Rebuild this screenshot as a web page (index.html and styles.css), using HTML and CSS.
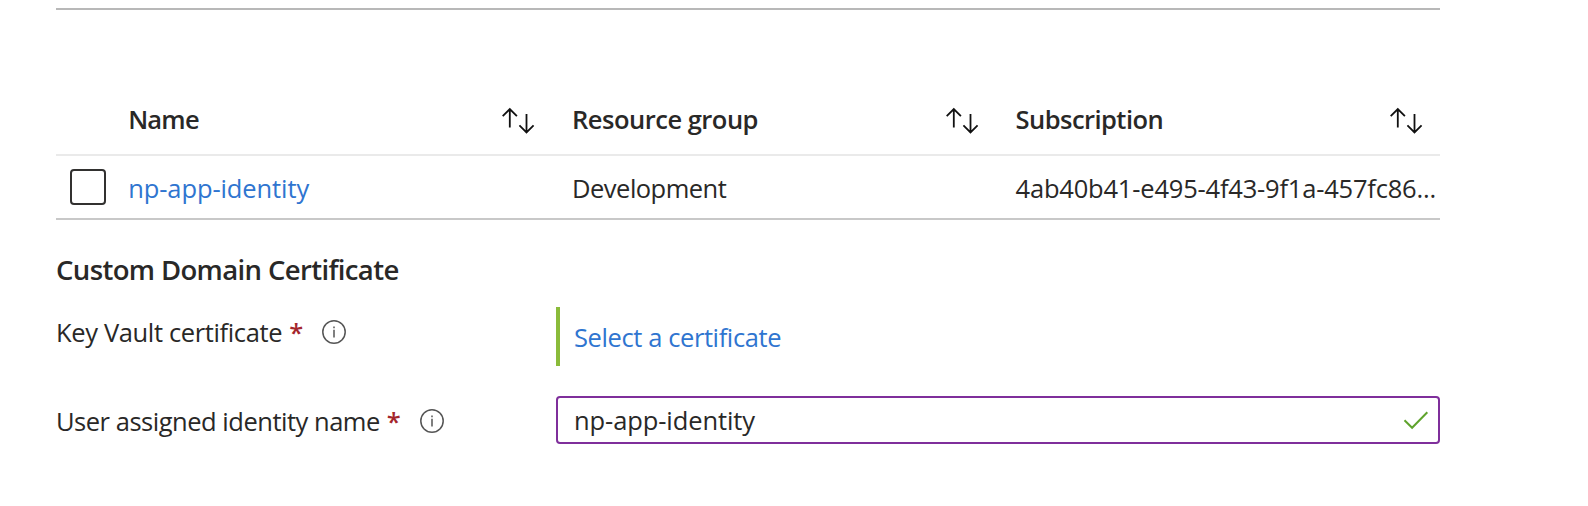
FILE: index.html
```html
<!DOCTYPE html>
<html lang="en">
<head>
<meta charset="utf-8">
<title>Custom Domain Certificate</title>
<link rel="stylesheet" href="styles.css">
</head>
<body>
<svg class="defs" aria-hidden="true">
  <symbol id="sort" viewBox="0 0 34 28"><path d="M7.8 20.5V2.3M.7 9.2l7.1-7.1 7.1 7.1M24.5 7v18.2M17.4 18.3l7.1 7.1 7.1-7.1"/></symbol>
  <symbol id="info" viewBox="0 0 24 24"><circle cx="12" cy="12" r="11.2"/><path d="M12 9.8v7.6M12 6.4v1.8"/></symbol>
</svg>
<main class="panel">
  <div class="identities">
    <div class="row head">
      <div class="cell"></div>
      <div class="cell"><span class="t-name">Name</span><svg class="sort"><use href="#sort"/></svg></div>
      <div class="cell"><span class="t-group">Resource group</span><svg class="sort"><use href="#sort"/></svg></div>
      <div class="cell"><span class="t-sub">Subscription</span><svg class="sort last"><use href="#sort"/></svg></div>
    </div>
    <div class="row body">
      <div class="cell"><span class="checkbox" role="checkbox" aria-checked="false"></span></div>
      <div class="cell"><a class="link t-identity">np-app-identity</a></div>
      <div class="cell"><span class="t-dev">Development</span></div>
      <div class="cell"><span class="t-guid">4ab40b41-e495-4f43-9f1a-457fc86...</span></div>
    </div>
  </div>
  <h2 class="title">Custom Domain Certificate</h2>
  <div class="field vault">
    <div class="label"><span class="t-vault">Key Vault certificate</span><span class="required">*</span><svg class="info"><use href="#info"/></svg></div>
    <div class="select"><a class="link t-select">Select a certificate</a></div>
  </div>
  <div class="field user">
    <div class="label"><span class="t-user">User assigned identity name</span><span class="required">*</span><svg class="info"><use href="#info"/></svg></div>
    <div class="input"><span class="t-identity">np-app-identity</span><svg class="check" viewBox="0 0 26 20"><path d="M1.5 10.3l7.6 7.5L24.3 2.2"/></svg></div>
  </div>
</main>
</body>
</html>
```
FILE: styles.css
```css
* { box-sizing: border-box; }
body {
  margin: 0;
  background: #fff;
  color: #292827;
  font: 25.5px/36px "Open Sans", "Noto Sans", sans-serif;
  white-space: nowrap;
}
.defs { display: none; }
.panel { width: 1384px; margin-left: 56px; padding-top: 8px; }
.identities { border-top: 2px solid #b8b8b8; padding-top: 74px; }
.row { display: grid; grid-template-columns: 72.2px 443.9px 443.5px 1fr; }
.cell { display: flex; align-items: center; }
.head { height: 72px; border-bottom: 2px solid #eaeaea; font-weight: 600; }
.body { height: 64px; border-bottom: 2px solid #c8c8c8; }
.body .cell + .cell { padding-top: 2px; }
.sort { width: 34px; height: 28px; margin-top: 3px; margin-left: auto; margin-right: 36px; fill: none; stroke: #111; stroke-width: 1.8; }
.sort.last { margin-right: 16px; }
.checkbox { width: 36px; height: 36px; margin-left: 14px; border: 2px solid #323130; border-radius: 4px; }
.link { color: #2f75d0; }
.title { margin: 32px 0 19px; font-size: 27.5px; line-height: 36px; font-weight: 600; letter-spacing: -.63px; }
.field { display: grid; grid-template-columns: 500px 1fr; }
.label { display: flex; align-items: center; height: 50px; }
.required { color: #a4262c; font-weight: 600; margin-left: 7px; width: 14px; }
.info { width: 24px; height: 24px; margin-left: 19px; fill: none; stroke: #555; stroke-width: 1.5; }
.select { height: 59px; display: flex; align-items: center; padding-left: 14px; border-left: 4px solid #8abb3a; }
.user { margin-top: 30px; }
.input { height: 48px; display: flex; align-items: center; justify-content: space-between; padding: 0 9px 1px 16px; border: 2px solid #7f2f9b; border-radius: 4px; }
.check { width: 26px; height: 20px; fill: none; stroke: #5fa32d; stroke-width: 2; }
.t-name { letter-spacing: -.8px; }
.t-group { letter-spacing: -.5px; }
.t-sub { letter-spacing: -.55px; }
.t-identity { letter-spacing: -.1px; }
.t-dev { letter-spacing: -.52px; }
.t-guid { letter-spacing: -.2px; }
.t-vault { letter-spacing: -.36px; }
.t-user { letter-spacing: -.48px; }
.t-select { letter-spacing: -.4px; }
```
